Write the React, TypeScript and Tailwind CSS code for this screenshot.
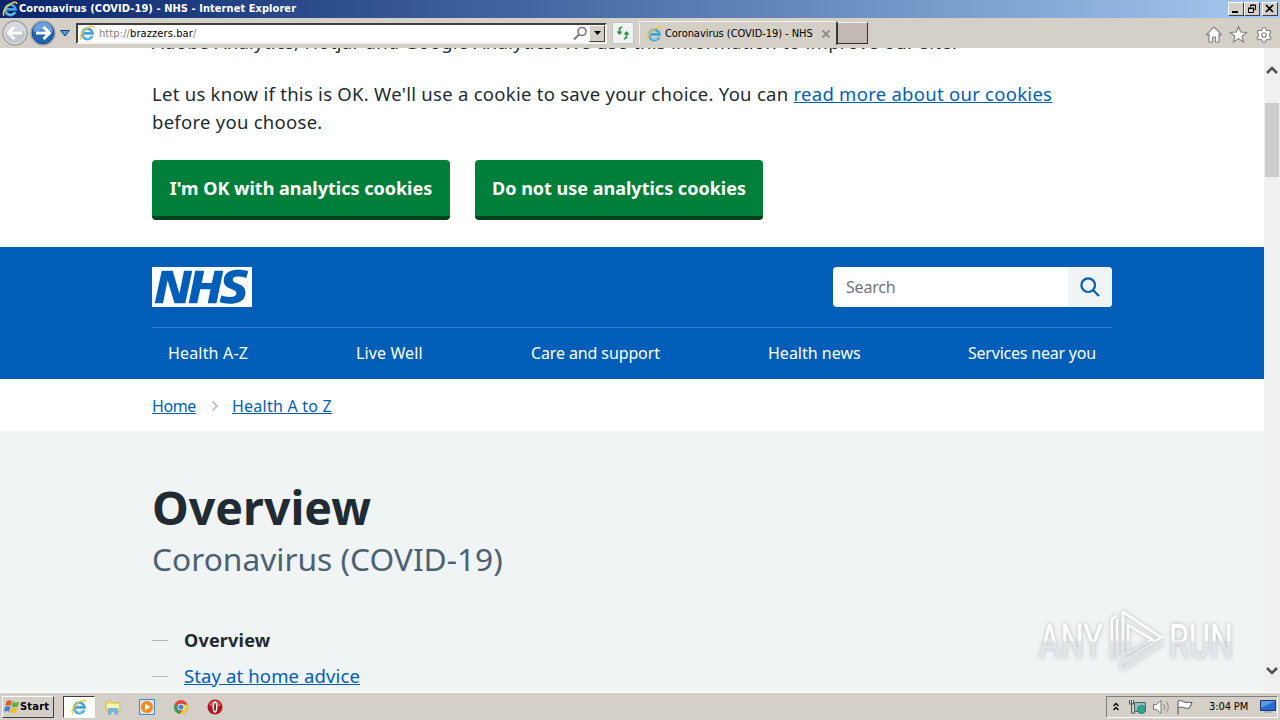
import { ReactNode } from 'react';
import { Settings } from 'lucide-react';

const navItems = [
  { label: 'Health A-Z', style: 'w-[80px] tracking-[0.17px]' },
  { label: 'Live Well', style: 'w-[67px] tracking-[0.12px]' },
  { label: 'Care and support', style: 'w-[129px] tracking-[-0.12px]' },
  { label: 'Health news', style: 'w-[92px]' },
  { label: 'Services near you', style: 'w-[128px] tracking-[-0.22px]' },
];

function IeLogo({ size = 16 }: { size?: number }) {
  return (
    <svg width={size} height={size} viewBox="0 0 16 16" fill="none" className="shrink-0">
      <path d="M13.2 11A5.2 5.2 0 1 1 13.6 8.4H4.5" stroke="#45a3dc" strokeWidth="2.7" />
      <path d="M12.8 11.3A5 5 0 0 1 4 10.5" stroke="#8bd4f6" strokeWidth="1" />
      <path d="M2.2 14.6C-.3 12 3.5 5.6 9 2.6c3-1.7 5.6-2 6 .2" stroke="#f0cc45" strokeWidth="1.6" />
    </svg>
  );
}

function NavCircle({ blue, flip }: { blue?: boolean; flip?: boolean }) {
  return (
    <svg width="26" height="26" viewBox="0 0 26 26" className="shrink-0">
      <circle cx="13" cy="13" r="12.3" fill={blue ? '#b6bfcb' : '#b9babc'} stroke="#8a8a8a" strokeWidth=".8" />
      <circle cx="13" cy="13" r="10.8" fill={blue ? '#2363b4' : '#c3c6cb'} stroke={blue ? '#16438c' : '#e6e6e8'} />
      <path d="M3 12a10 10 0 0 1 20 0c-6-2-14-2-20 0Z" fill={blue ? '#6ba0dc' : '#d6d9df'} />
      <path
        d="M12.5 7 6.5 13l6 6M7 13H20"
        stroke="#fff"
        strokeWidth="3"
        fill="none"
        transform={flip ? 'translate(26 0) scale(-1 1)' : undefined}
      />
    </svg>
  );
}

function WindowButton({ children }: { children: ReactNode }) {
  return (
    <div className="flex h-[14px] w-4 items-center justify-center border border-t-white border-l-white border-r-[#404040] border-b-[#404040] bg-[#d4d0c8]">
      <svg width="12" height="10" viewBox="0 0 12 10" stroke="#000" fill="none">
        {children}
      </svg>
    </div>
  );
}

function TitleBar() {
  return (
    <div className="flex h-[18px] items-center bg-linear-to-r from-[#0a246a] to-[#a6caf0] pr-[2px] pl-[2px]">
      <IeLogo />
      <span className="ml-px w-[277px] text-[11px] leading-[18px] font-bold tracking-[0.06px] whitespace-nowrap text-white">
        Coronavirus (COVID-19) - NHS - Internet Explorer
      </span>
      <div className="ml-auto flex">
        <WindowButton>
          <path d="M2 8h6" strokeWidth="2" />
        </WindowButton>
        <WindowButton>
          <path d="M4.5 3V1.5h5v4H8M2.5 4.5h5v4h-5zM4 1h6M2 4h6" />
        </WindowButton>
        <div className="ml-[2px]">
          <WindowButton>
            <path d="m2 1 7 7M9 1 2 8" strokeWidth="1.7" />
          </WindowButton>
        </div>
      </div>
    </div>
  );
}

function Toolbar() {
  return (
    <div className="flex h-[30px] items-center bg-[#d4d0c8] text-[11px] text-black">
      <div className="flex w-[76px] items-center pl-[2px]">
        <NavCircle />
        <div className="ml-[2px]">
          <NavCircle blue flip />
        </div>
        <svg width="10" height="7" viewBox="0 0 10 7" className="ml-1">
          <path d="M.5.5h9L5 6Z" fill="#4aa0dc" stroke="#173a70" />
        </svg>
      </div>
      <div className="flex h-[21px] w-[531px] items-center border-2 border-t-[#404040] border-r-[#f4f2ee] border-b-[#f4f2ee] border-l-[#404040] bg-white pl-px">
        <IeLogo />
        <span className="mt-[2px] ml-[4px] tracking-[0.1px] whitespace-nowrap text-[#808080]">
          http://<span className="text-black">brazzers.bar</span>/
        </span>
        <svg width="15" height="15" viewBox="0 0 15 15" fill="none" stroke="#777" className="ml-auto">
          <circle cx="9" cy="5.5" r="4" strokeWidth="1.6" />
          <path d="m6 8.5-5 5" strokeWidth="2" />
        </svg>
        <div className="ml-[1px] flex h-[17px] w-4 items-center justify-center border border-t-white border-r-[#404040] border-b-[#404040] border-l-white bg-[#d4d0c8]">
          <svg width="7" height="4">
            <path d="M0 0h7L3.5 4Z" />
          </svg>
        </div>
      </div>
      <div className="ml-[5px] flex h-[22px] w-[22px] items-center justify-center border border-[#c0c6cc] bg-[#f1f2f2]">
        <svg width="14" height="14" viewBox="0 0 14 14" fill="none" stroke="#2b9440" strokeWidth="1.6">
          <path d="M6 1 3.5 2.5V8" />
          <path d="M8 13l2.5-1.5V6" />
          <path d="M.5 5.5h6l-3 3.5ZM7.5 8.5h6l-3-3.500Z" fill="#2b9440" stroke="none" />
        </svg>
      </div>
      <div className="ml-[5px] flex h-6 w-[198px] items-center border-t border-r border-l border-t-[#f4f2ee] border-r-[#404040] border-l-[#f4f2ee] pl-[6px]">
        <IeLogo />
        <span className="mt-px ml-[3px] w-[148px] tracking-[-0.05px] whitespace-nowrap">Coronavirus (COVID-19) - NHS</span>
        <svg width="8" height="8" viewBox="0 0 8 8" stroke="#888" strokeWidth="1.8" className="ml-[9px]">
          <path d="m.5.5 7 7M7.5.5l-7 7" />
        </svg>
      </div>
      <div className="h-[22px] w-[31px] border border-t-[#f4f2ee] border-r-[#303030] border-b-[#303030] border-l-[#303030] bg-[#c1b9b2]" />
      <div className="mt-[3px] mr-[7px] ml-auto flex items-center gap-[7px]">
        <svg width="43" height="20" viewBox="0 0 43 20" fill="#fff" stroke="#8a8680" strokeWidth="1.2">
          <path d="M1.5 9.5 9 2l7.5 7.5-1.5 1-1-1V17h-3.500v-5h-3v5H4V9.5l-1 1Z" />
          <path d="m33.500 1.500 2.200 5.500 6 .4-4.600 3.800 1.500 5.800-5.100-3.200-5.100 3.200 1.500-5.800-4.600-3.800 6-.4Z" />
        </svg>
        <Settings size={18} fill="#fff" color="#8a8680" strokeWidth={1.6} />
      </div>
    </div>
  );
}

function CookieBanner() {
  return (
    <section className="h-[199px] shrink-0 pl-[152px] text-[18.5px] leading-7 tracking-[0.27px] text-[#212b32]">
      <p className="-mt-5 mb-6 whitespace-nowrap">
        Adobe Analytics, Hotjar and Google Analytics. We use this information to improve our site.
      </p>
      <p className="whitespace-nowrap">
        Let us know if this is OK. We'll use a cookie to save your choice. You can{' '}
        <a className="text-[#005eb8] underline">read more about our cookies</a>
        <br />
        before you choose.
      </p>
      <div className="mt-6 flex gap-[25px] text-center text-[18px] font-bold tracking-normal whitespace-nowrap text-white">
        <button className="h-[60px] w-[298px] rounded-[4px] border-b-4 border-[#00401e] bg-[#007f3b]">
          I'm OK with analytics cookies
        </button>
        <button className="h-[60px] w-[288px] rounded-[4px] border-b-4 border-[#00401e] bg-[#007f3b]">
          Do not use analytics cookies
        </button>
      </div>
    </section>
  );
}

function Header() {
  return (
    <header className="h-[132px] shrink-0 bg-[#005eb8] px-[152px] pt-5">
      <div className="flex h-10 justify-between">
        <svg width="100" height="40" viewBox="0 0 40 16">
          <path fill="#fff" d="M0 0h40v16H0z" />
          <path
            fill="#005eb8"
            d="M3.900 1.500h4.400l2.600 9h.1l1.800-9h3.300l-2.800 13H9l-2.700-9h-.1l-1.800 9H1.100M17.300 1.500h3.600l-1 4.900h4L25 1.500h3.500l-2.700 13h-3.500l1.100-5.600h-4.100l-1.200 5.600h-3.400M37.700 4.400c-.7-.3-1.600-.6-2.900-.6-1.400 0-2.500.2-2.500 1.300 0 1.800 5.100 1.200 5.100 5.100 0 3.600-3.300 4.500-6.400 4.500-1.300 0-2.900-.3-4-.7l.8-2.700c.7.4 2.100.7 3.200.7s2.800-.2 2.800-1.500c0-2.100-5.100-1.300-5.100-5 0-3.400 2.900-4.400 5.800-4.400 1.600 0 3.100.2 4 .6"
          />
        </svg>
        <div className="flex w-[279px] overflow-hidden rounded-[4px] bg-white text-base">
          <span className="flex-1 pl-[13px] leading-10 tracking-[-0.2px] text-[#757575]">Search</span>
          <div className="flex w-11 items-center justify-center bg-[#f0f4f5]">
            <svg width="20" height="20" viewBox="0 0 20 20" fill="none" stroke="#005eb8" strokeWidth="2.2">
              <circle cx="8.2" cy="8.2" r="6.8" />
              <path d="m13 13 6 6" />
            </svg>
          </div>
        </div>
      </div>
      <nav className="mt-5 flex h-[52px] justify-between border-t border-[#337ec6] px-4 text-base leading-[51px] text-white">
        {navItems.map(({ label, style }) => (
          <a key={label} className={`whitespace-nowrap ${style}`}>
            {label}
          </a>
        ))}
      </nav>
    </header>
  );
}

function Breadcrumb() {
  return (
    <div className="flex h-[52px] shrink-0 items-center px-[152px] pt-[3px] pb-[2px] text-base leading-6 text-[#005eb8]">
      <a className="w-11 tracking-[-0.4px] whitespace-nowrap underline">Home</a>
      <svg width="6" height="10" viewBox="0 0 6 10" fill="none" stroke="#aeb7bd" strokeWidth="1.5" className="mr-[14px] ml-4">
        <path d="m.5.5 4.5 4.5-4.5 4.5" />
      </svg>
      <a className="tracking-[0.23px] whitespace-nowrap underline">Health A to Z</a>
    </div>
  );
}

function Article() {
  return (
    <main className="h-[261px] shrink-0 bg-[#f0f4f5] px-[152px] pt-12">
      <h1 className="text-[46.5px] leading-[56px] font-bold text-[#212b32]">Overview</h1>
      <p className="text-[31.7px] leading-[47px] text-[#4c6272]">Coronavirus (COVID-19)</p>
      <ul className="mt-10 text-[18px] leading-9">
        <li className="flex items-center gap-4">
          <span className="mt-px h-px w-4 bg-[#aeb7bd]" />
          <span className="font-bold tracking-[0.2px] text-[#212b32]">Overview</span>
        </li>
        <li className="flex items-center gap-4">
          <span className="mt-px h-px w-4 bg-[#aeb7bd]" />
          <a className="text-[18.5px] tracking-[0.12px] text-[#005eb8] underline">Stay at home advice</a>
        </li>
      </ul>
    </main>
  );
}

function Watermark() {
  return (
    <svg
      width="204"
      height="70"
      viewBox="0 0 204 70"
      className="absolute top-[558px] left-[1034px] drop-shadow-[0_0_2px_#b4b8ba]"
    >
      <defs>
        <linearGradient id="fade" x1="0" x2="0" y1="0" y2="70" gradientUnits="userSpaceOnUse">
          <stop offset=".49" stopColor="#fff" />
          <stop offset=".51" stopColor="#e3e6e7" />
        </linearGradient>
      </defs>
      <g fill="url(#fade)" fontFamily="Roboto" fontSize="48">
        <text x="5" y="52" textLength="64" lengthAdjust="spacingAndGlyphs">ANY</text>
        <text x="135" y="52" textLength="64" lengthAdjust="spacingAndGlyphs">RUN</text>
      </g>
      <path
        d="M83 10l-5 3v40M83 14v38M125 30 89 6v43l5-3V19l25 15M129 30 87 57v5l3 1 38-25M95 47l22-13"
        fill="none"
        stroke="url(#fade)"
        strokeWidth="2.4"
        strokeLinecap="round"
        strokeLinejoin="round"
      />
    </svg>
  );
}

function ScrollBar() {
  return (
    <div className="flex w-4 flex-col items-center bg-[#f0f0f0]">
      <svg width="12" height="8" viewBox="0 0 12 8" fill="none" stroke="#505050" strokeWidth="2.5" className="mt-[18px]">
        <path d="m1 7 5-5 5 5" />
      </svg>
      <div className="mt-[29px] h-[74px] w-[14px] bg-[#cdcdcd]" />
      <svg width="12" height="8" viewBox="0 0 12 8" fill="none" stroke="#505050" strokeWidth="2.5" className="mt-auto mb-[17px]">
        <path d="m1 1 5 5 5-5" />
      </svg>
    </div>
  );
}

function Taskbar() {
  return (
    <footer className="flex h-7 items-center border-t border-white bg-[#d4d0c8] px-[2px] text-[11px] text-black">
      <div className="flex h-[22px] w-[52px] items-center border border-t-white border-r-[#404040] border-b-[#404040] border-l-white pl-px font-bold">
        <svg width="16" height="15" viewBox="0 0 15 14">
          <path d="M2.5 2C4 1 6 1 7.5 2L6.2 6.5C5 5.6 3 5.6 1.2 6.500Z" fill="#e4572a" />
          <path d="M8.2 2.5c2 1 4 1 6 0L13 7c-2 1-4 1-6 0Z" fill="#61b13e" />
          <path d="M1 7.5c1.7-1 3.500-1 5 0L4.7 12c-1.400-1-3.200-1-4.700 0Z" fill="#3a83d6" />
          <path d="M6.700 8c2 1 4 1 6 0l-1.300 4.500c-2 1-4 1-6 0Z" fill="#f5bd26" />
        </svg>
        <span className="mt-[2px] tracking-[0.2px]">Start</span>
      </div>
      <div className="ml-[9px] flex h-[22px] w-8 items-center justify-center border border-t-[#404040] border-r-white border-b-white border-l-[#404040] bg-white">
        <IeLogo />
      </div>
      <svg width="16" height="16" viewBox="0 0 16 16" className="ml-[10px]">
        <path d="M1 2h5l1 1.5h8V12H1Z" fill="#f0d77c" stroke="#cfae4c" strokeWidth=".6" />
        <path d="M2 5h12v5H2Z" fill="#fbf2b4" />
        <path d="M3.5 15V9.5h9V15h-2.500v-3H6v3Z" fill="#76bde4" stroke="#4b99c9" strokeWidth=".6" />
      </svg>
      <svg width="16" height="16" viewBox="0 0 16 16" className="ml-[18px]">
        <path d="M.5.5h15v15H.5Z" fill="#cfe4f5" stroke="#4b88bc" />
        <circle cx="8" cy="8" r="6" fill="#f28a1a" />
        <path d="m6 4.500 5.500 3.500L6 11.500Z" fill="#fff" />
      </svg>
      <svg width="14" height="14" viewBox="0 0 14 14" className="ml-[19px]">
        <circle cx="7" cy="7" r="7" fill="#dc4a3d" />
        <path d="M.9 3.5 5 9l2 5A7 7 0 0 1 .9 3.500Z" fill="#37a055" />
        <path d="M13.4 4.5H7L9 9l-2.800 5a7 7 0 0 0 7.200-9.500Z" fill="#f9ce3c" />
        <circle cx="7" cy="7" r="3.3" fill="#fff" />
        <circle cx="7" cy="7" r="2.6" fill="#4a80dc" />
      </svg>
      <svg width="16" height="16" viewBox="0 0 16 16" className="ml-[19px]">
        <circle cx="8" cy="8" r="7.5" fill="#b4171b" />
        <path d="M2 6a6.500 6.500 0 0 1 12 0c-3 2-9 2-12 0Z" fill="#dc5655" />
        <ellipse cx="8" cy="8" rx="1.7" ry="4.9" fill="#8a0c10" stroke="#fff" strokeWidth="1.5" />
      </svg>
      <div className="ml-auto flex h-[22px] w-[172px] items-center border border-t-[#808080] border-r-white border-b-white border-l-[#808080] pl-[6px]">
        <svg width="6" height="9" viewBox="0 0 6 9" fill="none" stroke="#000" strokeWidth="1.3">
          <path d="m.5 4 2.500-2.500L5.500 4M.5 8 3 5.500 5.500 8" />
        </svg>
        <svg width="64" height="16" viewBox="0 0 64 16" fill="none" className="ml-[10px]">
          <path d="M.5 1v4h4V1M2.500 1v13h4" stroke="#555" />
          <path d="M5.500 3.500h11v9h-11Z" fill="#8fbfc0" stroke="#4b6668" />
          <circle cx="12.5" cy="10.5" r="4" fill="#30a58b" stroke="#2b7c82" />
          <path d="M24.500 5.500h3l4.500-4v13l-4.500-4h-3Z" fill="#fff" stroke="#777" />
          <path d="M34.500 5c1.500 2 1.500 4 0 6M37 2.500c3 3.500 3 7.500 0 11" stroke="#888" />
          <path d="M49 15.500V2c3.500-1.500 4.500 1 7 1.200l7 .3-2.500 5.500c-4.500 1.500-7-2.500-11.500 0" fill="#fff" stroke="#555" />
        </svg>
        <span className="mt-px ml-[16px] w-10 tracking-[-0.1px] whitespace-nowrap">3:04 PM</span>
        <svg width="16" height="13" viewBox="0 0 16 13" className="mr-[1px] ml-auto shrink-0">
          <path d="M.5.5h15v10H.5Z" fill="#286bd0" stroke="#173974" />
          <path d="M1 1h14L1 8Z" fill="#5a98e9" />
          <path d="M4 12h8" stroke="#8b97a6" />
        </svg>
      </div>
    </footer>
  );
}

export default function App() {
  return (
    <div className="flex h-[720px] w-[1280px] flex-col overflow-hidden bg-white font-['DejaVu_Sans_Condensed','DejaVu_Sans',sans-serif]">
      <TitleBar />
      <Toolbar />
      <div className="relative flex h-[644px] overflow-hidden">
        <div className="flex w-[1264px] flex-col overflow-hidden font-['Noto_Sans',sans-serif]">
          <CookieBanner />
          <Header />
          <Breadcrumb />
          <Article />
        </div>
        <ScrollBar />
        <Watermark />
      </div>
      <Taskbar />
    </div>
  );
}
